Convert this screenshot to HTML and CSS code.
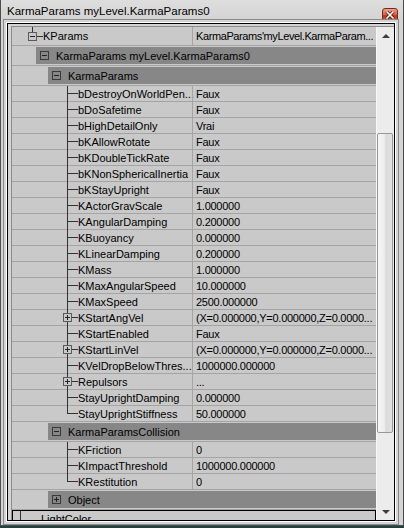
FILE: index.html
```html
<!DOCTYPE html>
<html>
<head>
<meta charset="utf-8">
<link rel="stylesheet" href="styles.css">
</head>
<body>
<div class="window">
  <div class="titlebar">
    <span class="title">KarmaParams myLevel.KarmaParams0</span>
    <span class="close"><svg width="10" height="8" viewBox="0 0 10 8"><path d="M1.5 0.5 L8.5 7.5 M8.5 0.5 L1.5 7.5" stroke="#3a1208" stroke-width="3"/><path d="M1.5 0.5 L8.5 7.5 M8.5 0.5 L1.5 7.5" stroke="#ffffff" stroke-width="1.6"/></svg></span>
  </div>
  <div class="frame">
    <div class="grid">
      <div class="list">
        <div class="row first">
          <div class="name lv0"><span class="conn up"><span class="box minus"></span></span><span class="txt">KParams</span></div>
          <div class="val">KarmaParams'myLevel.KarmaParam...</div>
        </div>
        <div class="hrow h1"><div class="bar"><span class="box minus"></span>KarmaParams myLevel.KarmaParams0</div></div>
        <div class="hrow h2"><div class="bar"><span class="box minus"></span>KarmaParams</div></div>

        <div class="row"><div class="name lv2"><span class="conn tee"></span><span class="txt">bDestroyOnWorldPen...</span></div><div class="val">Faux</div></div>
        <div class="row"><div class="name lv2"><span class="conn tee"></span><span class="txt">bDoSafetime</span></div><div class="val">Faux</div></div>
        <div class="row"><div class="name lv2"><span class="conn tee"></span><span class="txt">bHighDetailOnly</span></div><div class="val">Vrai</div></div>
        <div class="row"><div class="name lv2"><span class="conn tee"></span><span class="txt">bKAllowRotate</span></div><div class="val">Faux</div></div>
        <div class="row"><div class="name lv2"><span class="conn tee"></span><span class="txt">bKDoubleTickRate</span></div><div class="val">Faux</div></div>
        <div class="row"><div class="name lv2"><span class="conn tee"></span><span class="txt">bKNonSphericalInertia</span></div><div class="val">Faux</div></div>
        <div class="row"><div class="name lv2"><span class="conn tee"></span><span class="txt">bKStayUpright</span></div><div class="val">Faux</div></div>
        <div class="row"><div class="name lv2"><span class="conn tee"></span><span class="txt">KActorGravScale</span></div><div class="val">1.000000</div></div>
        <div class="row"><div class="name lv2"><span class="conn tee"></span><span class="txt">KAngularDamping</span></div><div class="val">0.200000</div></div>
        <div class="row"><div class="name lv2"><span class="conn tee"></span><span class="txt">KBuoyancy</span></div><div class="val">0.000000</div></div>
        <div class="row"><div class="name lv2"><span class="conn tee"></span><span class="txt">KLinearDamping</span></div><div class="val">0.200000</div></div>
        <div class="row"><div class="name lv2"><span class="conn tee"></span><span class="txt">KMass</span></div><div class="val">1.000000</div></div>
        <div class="row"><div class="name lv2"><span class="conn tee"></span><span class="txt">KMaxAngularSpeed</span></div><div class="val">10.000000</div></div>
        <div class="row"><div class="name lv2"><span class="conn tee"></span><span class="txt">KMaxSpeed</span></div><div class="val">2500.000000</div></div>
        <div class="row"><div class="name lv2"><span class="conn tee"><span class="box plus"></span></span><span class="txt">KStartAngVel</span></div><div class="val">(X=0.000000,Y=0.000000,Z=0.0000...</div></div>
        <div class="row"><div class="name lv2"><span class="conn tee"></span><span class="txt">KStartEnabled</span></div><div class="val">Faux</div></div>
        <div class="row"><div class="name lv2"><span class="conn tee"><span class="box plus"></span></span><span class="txt">KStartLinVel</span></div><div class="val">(X=0.000000,Y=0.000000,Z=0.0000...</div></div>
        <div class="row"><div class="name lv2"><span class="conn tee"></span><span class="txt">KVelDropBelowThres...</span></div><div class="val">1000000.000000</div></div>
        <div class="row"><div class="name lv2"><span class="conn tee"><span class="box plus"></span></span><span class="txt">Repulsors</span></div><div class="val">...</div></div>
        <div class="row"><div class="name lv2"><span class="conn tee"></span><span class="txt">StayUprightDamping</span></div><div class="val">0.000000</div></div>
        <div class="row"><div class="name lv2"><span class="conn last"></span><span class="txt">StayUprightStiffness</span></div><div class="val">50.000000</div></div>

        <div class="hrow h2"><div class="bar"><span class="box minus"></span>KarmaParamsCollision</div></div>
        <div class="row"><div class="name lv2"><span class="conn tee"></span><span class="txt">KFriction</span></div><div class="val">0</div></div>
        <div class="row"><div class="name lv2"><span class="conn tee"></span><span class="txt">KImpactThreshold</span></div><div class="val">1000000.000000</div></div>
        <div class="row"><div class="name lv2"><span class="conn last"></span><span class="txt">KRestitution</span></div><div class="val">0</div></div>

        <div class="hrow h2"><div class="bar"><span class="box plus"></span>Object</div></div>
        <div class="row focus"><div class="name lvf"><span class="conn stub"></span><span class="txt">LightColor</span></div><div class="val"></div></div>
      </div>
      <div class="scrollbar">
        <div class="sbtn"><span class="arrow-up"></span></div>
        <div class="track"><div class="thumb"></div></div>
        <div class="sbtn"><span class="arrow-down"></span></div>
      </div>
    </div>
  </div>
</div>
</body>
</html>
```

FILE: styles.css
```css
html, body {
  margin: 0;
  padding: 0;
}
body {
  width: 404px;
  height: 528px;
  overflow: hidden;
  background: #23413f;
  font-family: "Liberation Sans", Arial, sans-serif;
  color: #000;
}
.window {
  width: 404px;
  height: 526px;
  box-sizing: border-box;
  border: 1px solid #4d4d4d;
  border-top: 0;
  background: #d4d4d4;
  display: flex;
  flex-direction: column;
}
.titlebar {
  height: 23px;
  flex: none;
  display: flex;
  align-items: flex-start;
  background: linear-gradient(#dedede, #d2d2d2);
}
.title {
  font-size: 11.5px;
  margin: 5px 0 0 6px;
  white-space: nowrap;
}
.close {
  margin: 8px 5px 0 auto;
  width: 16px;
  height: 14px;
  box-sizing: border-box;
  border: 1px solid #7b2a18;
  border-radius: 3px;
  background: linear-gradient(#eba08a, #d9644a 45%, #c5341a 55%, #d2583a);
  display: flex;
  align-items: center;
  justify-content: center;
}
.close svg { display: block; }
.frame {
  flex: 1;
  margin: 0 8px 4px 6px;
  border: 1px solid #000;
  box-shadow: 0 0 0 1px #ffffff, 0 0 0 3px #d4d4d4, 0 0 0 4px #8a8a8a;
  padding: 2px 0 0 3px;
  display: flex;
  min-height: 0;
}
.grid {
  flex: 1;
  display: flex;
  border-left: 1px solid #8c8c8c;
  border-top: 1px solid #8c8c8c;
  background: #c9c9c9;
  overflow: hidden;
  min-height: 0;
}
.list {
  width: 364px;
  flex: none;
  font-size: 11px;
  overflow: hidden;
}
.row {
  height: 16px;
  box-sizing: border-box;
  border-bottom: 1px solid #a4a4a4;
  display: flex;
}
.row.first { height: 19px; }
.name {
  width: 180px;
  flex: none;
  display: flex;
  align-items: flex-start;
  white-space: nowrap;
  box-sizing: border-box;
}
.txt {
  line-height: 13px;
  padding-top: 2px;
}
.row.first .txt { padding-top: 3px; }
.lv0 { padding-left: 16px; }
.lv2 { padding-left: 51px; }
.lvf { padding-left: 3px; }
.val {
  flex: 1;
  border-left: 1px solid #a4a4a4;
  padding: 2px 0 0 3px;
  line-height: 13px;
  white-space: nowrap;
  overflow: hidden;
  letter-spacing: -0.26px;
}
.row.first .val {
  padding-top: 3px;
  letter-spacing: -0.4px;
}
.conn {
  width: 15px;
  height: 16px;
  flex: none;
  display: flex;
  align-items: flex-start;
}
.row.first .conn { height: 19px; }
.conn.tee {
  background:
    linear-gradient(#333, #333) 4px 0 / 1px 16px no-repeat,
    linear-gradient(#333, #333) 4px 7px / 11px 1px no-repeat;
}
.conn.last {
  background:
    linear-gradient(#333, #333) 4px 0 / 1px 8px no-repeat,
    linear-gradient(#333, #333) 4px 7px / 11px 1px no-repeat;
}
.conn.up {
  background:
    linear-gradient(#333, #333) 4px 0 / 1px 5px no-repeat,
    linear-gradient(#333, #333) 9px 9px / 6px 1px no-repeat;
}
.conn.stub {
  background: linear-gradient(#333, #333) 4px 0 / 1px 16px no-repeat;
  width: 25px;
}
.conn .box { margin-top: 3px; }
.row.first .conn .box { margin-top: 5px; }
.box {
  width: 9px;
  height: 9px;
  box-sizing: border-box;
  border: 1px solid #5a5a5a;
  flex: none;
  background:
    linear-gradient(#222, #222) 1px 3px / 5px 1px no-repeat;
}
.conn .box { background-color: #c9c9c9; }
.box.plus {
  background:
    linear-gradient(#222, #222) 1px 3px / 5px 1px no-repeat,
    linear-gradient(#222, #222) 3px 1px / 1px 5px no-repeat;
}
.conn .box.plus { background-color: #c9c9c9; }
.hrow {
  height: 20px;
  box-sizing: border-box;
  padding: 1px 0 1px 0;
  border-bottom: 1px solid #a4a4a4;
  display: flex;
}
.h1 { padding-left: 24px; }
.h2 { padding-left: 36px; }
.bar {
  flex: 1;
  background: #878787;
  display: flex;
  align-items: center;
  padding-left: 4px;
  white-space: nowrap;
}
.bar .box {
  margin-right: 7px;
  border-color: #3a3a3a;
}
.row.focus {
  border: 1px solid #000;
  height: 18px;
}
.row.focus .txt { padding-top: 2px; }
.row.focus .val { border-left-color: transparent; }
.scrollbar {
  width: 18px;
  flex: none;
  display: flex;
  flex-direction: column;
  background: #ececec;
  border-left: 1px solid #f7f7f7;
  box-sizing: border-box;
}
.sbtn {
  height: 17px;
  flex: none;
  display: flex;
  align-items: center;
  justify-content: center;
}
.track {
  flex: 1;
  min-height: 0;
}
.thumb {
  margin: 89px 0 0 0;
  width: 16px;
  height: 300px;
  box-sizing: border-box;
  border: 1px solid #979797;
  border-radius: 2px;
  background: linear-gradient(to right, #f6f6f6, #ebebeb 50%, #d9d9d9 55%, #e3e3e3);
}
.arrow-up {
  width: 0;
  height: 0;
  border-left: 4px solid transparent;
  border-right: 4px solid transparent;
  border-bottom: 4px solid #3c3c3c;
}
.arrow-down {
  width: 0;
  height: 0;
  border-left: 4px solid transparent;
  border-right: 4px solid transparent;
  border-top: 4px solid #3c3c3c;
}
```
